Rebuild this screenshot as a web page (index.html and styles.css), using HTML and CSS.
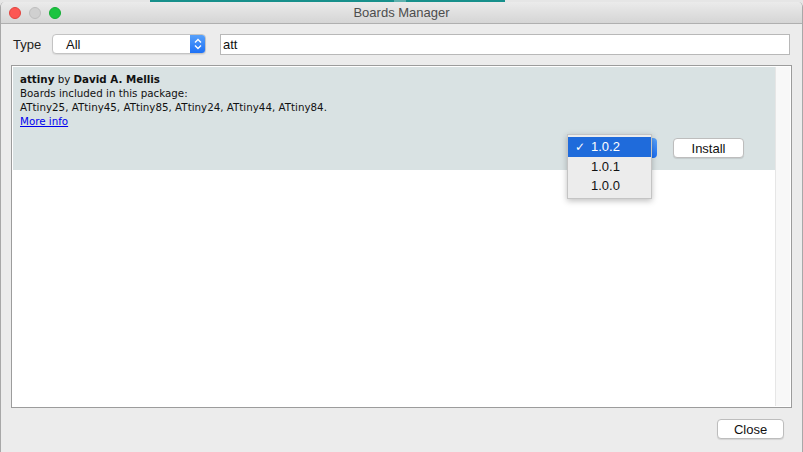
FILE: index.html
```html
<!DOCTYPE html>
<html>
<head>
<meta charset="utf-8">
<link rel="stylesheet" href="styles.css">
</head>
<body>
<div class="desk">
  <div class="desk-app"><span class="desk-light"></span></div>
</div>
<div class="window">
  <div class="titlebar">
    <div class="lights">
      <span class="light red"></span>
      <span class="light gray"></span>
      <span class="light green"></span>
    </div>
    <div class="title">Boards Manager</div>
  </div>
  <div class="body">
    <div class="filter">
      <span class="label">Type</span>
      <div class="select">
        <span class="select-text">All</span>
        <span class="stepper">
          <svg width="8" height="12" viewBox="0 0 8 12"><path d="M1 4.5 L4 1.5 L7 4.5 M1 7.5 L4 10.5 L7 7.5" fill="none" stroke="#fff" stroke-width="1.4"/></svg>
        </span>
      </div>
      <input class="search" type="text" value="att">
    </div>
    <div class="list">
      <div class="items">
        <div class="item">
          <div class="line"><b>attiny</b> by <b>David A. Mellis</b></div>
          <div class="line">Boards included in this package:</div>
          <div class="line">ATtiny25, ATtiny45, ATtiny85, ATtiny24, ATtiny44, ATtiny84.</div>
          <div class="line"><a class="more" href="#">More info</a></div>
          <div class="actions">
            <div class="version">
              <span class="version-stepper"></span>
              <div class="popup">
                <div class="opt sel"><span class="check">✓</span>1.0.2</div>
                <div class="opt">1.0.1</div>
                <div class="opt">1.0.0</div>
              </div>
            </div>
            <button class="btn install">Install</button>
          </div>
        </div>
      </div>
      <div class="scroll"></div>
    </div>
    <div class="footer">
      <button class="btn close">Close</button>
    </div>
  </div>
</div>
</body>
</html>
```
FILE: styles.css
```css
html, body {
  margin: 0;
  padding: 0;
  width: 803px;
  height: 452px;
  overflow: hidden;
  background: #ececec;
  font-family: "Liberation Sans", Arial, sans-serif;
}
.desk {
  position: absolute;
  left: 0;
  top: 0;
  width: 803px;
  height: 4px;
  background: #e6e6e6;
}
.desk-app {
  position: absolute;
  left: 150px;
  top: 0;
  width: 355px;
  height: 2px;
  background: #17908c;
  overflow: hidden;
}
.desk-light {
  position: absolute;
  left: 244px;
  top: 0;
  width: 12px;
  height: 2px;
  background: #5eb1ae;
}
.window {
  position: relative;
  margin-top: 2px;
  height: 450px;
  border-left: 1px solid #a8a8a8;
  border-right: 1px solid #a8a8a8;
  border-radius: 5px 5px 0 0;
  background: #ececec;
  overflow: hidden;
  display: flex;
  flex-direction: column;
}
.titlebar {
  height: 21px;
  background: linear-gradient(#ebebeb, #d5d5d5);
  border-bottom: 1px solid #afafaf;
  display: flex;
  align-items: center;
  position: relative;
}
.lights {
  display: flex;
  gap: 8px;
  padding-left: 8px;
}
.light {
  width: 12px;
  height: 12px;
  border-radius: 50%;
  box-sizing: border-box;
}
.red { background: #fc5753; border: 1px solid #e0443e; }
.gray { background: #d0d0d0; border: 1px solid #bdbdbd; }
.green { background: #1bc440; border: 1px solid #14ad35; }
.title {
  position: absolute;
  left: 0;
  right: 0;
  top: 3px;
  text-align: center;
  font-size: 13px;
  color: #4d4d4d;
}
.body {
  flex: 1;
  display: flex;
  flex-direction: column;
  padding: 9px 10px 0 10px;
}
.filter {
  display: flex;
  align-items: center;
  height: 22px;
}
.label {
  font-size: 13px;
  color: #222;
  margin-left: 2px;
  width: 39px;
}
.select {
  width: 154px;
  height: 20px;
  box-sizing: border-box;
  background: #fff;
  border: 1px solid #c3c3c3;
  border-radius: 4px;
  display: flex;
  align-items: center;
  box-shadow: 0 1px 1px rgba(0,0,0,0.08);
  overflow: hidden;
}
.select-text {
  flex: 1;
  font-size: 13px;
  color: #111;
  padding-left: 13px;
}
.stepper {
  width: 16px;
  height: 20px;
  background: linear-gradient(#5aa3fb, #1b6ef5);
  display: flex;
  align-items: center;
  justify-content: center;
  margin-right: -1px;
}
.search {
  margin-left: 14px;
  width: 570px;
  height: 21px;
  box-sizing: border-box;
  border: 1px solid #b8b8b8;
  background: #fff;
  font-family: "Liberation Sans", Arial, sans-serif;
  font-size: 13px;
  padding: 0 0 0 2px;
  color: #111;
  outline: none;
}
.list {
  margin-top: 10px;
  height: 343px;
  border: 1px solid #9c9c9c;
  background: #fff;
  display: flex;
  padding: 1px;
  box-sizing: border-box;
}
.items {
  flex: 1;
  background: #fff;
}
.item {
  height: 103px;
  background: #d9e2e3;
  padding: 5px 7px 0 7px;
  box-sizing: border-box;
  position: relative;
  font-family: "DejaVu Sans", Verdana, sans-serif;
  font-size: 10.3px;
  color: #111;
}
.line {
  height: 14px;
  line-height: 14px;
  white-space: nowrap;
}
.more {
  color: #0000ee;
  text-decoration: underline;
}
.actions {
  display: flex;
  justify-content: flex-end;
  align-items: center;
  padding-right: 24px;
  margin-top: 10px;
}
.version {
  position: relative;
  width: 90px;
  height: 20px;
}
.version-stepper {
  position: absolute;
  right: 0;
  top: 0;
  width: 12px;
  height: 20px;
  border-radius: 0 4px 4px 0;
  background: linear-gradient(#5aa3fb, #1b6ef5);
}
.popup {
  position: absolute;
  left: 0;
  top: -4px;
  width: 83px;
  background: #ececec;
  border: 1px solid #c4c4c4;
  box-shadow: 0 2px 6px rgba(0,0,0,0.25);
  padding: 2px 0 3px 0;
  font-family: "Liberation Sans", Arial, sans-serif;
  font-size: 13px;
  color: #111;
}
.opt {
  height: 19px;
  line-height: 19px;
  padding-left: 23px;
  position: relative;
}
.opt.sel {
  background: #1f6bdb;
  color: #fff;
  height: 20px;
  line-height: 20px;
}
.check {
  position: absolute;
  left: 7px;
  font-family: "DejaVu Sans", sans-serif;
  font-size: 12px;
}
.btn {
  font-family: "Liberation Sans", Arial, sans-serif;
  font-size: 13px;
  color: #111;
  background: #fff;
  border: 1px solid #bdbdbd;
  border-radius: 4px;
  height: 20px;
  padding: 0;
  box-shadow: 0 1px 1px rgba(0,0,0,0.1);
}
.install {
  width: 71px;
  margin-left: 16px;
}
.scroll {
  width: 14px;
  background: #f8f8f8;
  border-left: 1px solid #e6e6e6;
}
.footer {
  display: flex;
  justify-content: flex-end;
  padding-top: 11px;
  padding-right: 8px;
}
.close {
  width: 67px;
}
```
